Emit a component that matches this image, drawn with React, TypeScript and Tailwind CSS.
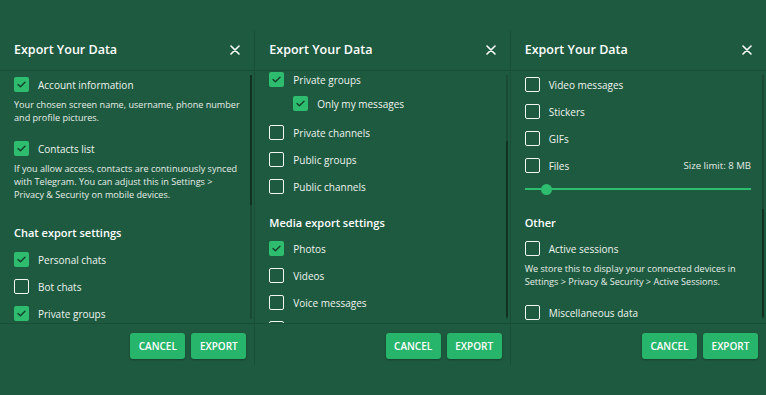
import React from 'react';

const font = { fontFamily: '"Open Sans", "Noto Sans", sans-serif' };

function Box({ checked }: { checked?: boolean }) {
  if (checked) {
    return (
      <span className="w-[15px] h-[15px] shrink-0 rounded-[2px] bg-[#2ebd6e] flex items-center justify-center">
        <svg width="9" height="7" viewBox="0 0 9 7" fill="none">
          <path d="M1 3.6 L3.4 5.8 L8 1.2" stroke="#163f2b" strokeWidth="1.4" strokeLinecap="round" strokeLinejoin="round" />
        </svg>
      </span>
    );
  }
  return <span className="w-[15px] h-[15px] shrink-0 rounded-[2px] border-[1.5px] border-[#f2f6f3]" />;
}

function Row({ label, checked, className = '', right }: { label: string; checked?: boolean; className?: string; right?: string }) {
  return (
    <div className={`h-[16px] flex items-center gap-[9px] ${className}`}>
      <Box checked={checked} />
      <span className="text-[10px] text-[#eef4f0] leading-none flex-1 whitespace-nowrap pt-[1px]">{label}</span>
      {right && <span className="text-[9.6px] text-[#e3ebe6] leading-none pt-[1px]">{right}</span>}
    </div>
  );
}

function Desc({ children, className = '' }: { children: React.ReactNode; className?: string }) {
  return <p className={`text-[9.1px] leading-[13px] text-[#e6eee9] whitespace-nowrap ${className}`}>{children}</p>;
}

function Heading({ children, className = '' }: { children: React.ReactNode; className?: string }) {
  return <div className={`h-[16px] flex items-center text-[11px] font-semibold text-white ${className}`}>{children}</div>;
}

function Panel({ children, thumbTop, thumbHeight, last }: { children: React.ReactNode; thumbTop: number; thumbHeight: number; last?: boolean }) {
  return (
    <div className={`flex flex-col h-[335px] ${last ? '' : 'border-r border-[#1a4f37]'}`}>
      <div className="h-[41px] shrink-0 flex items-center justify-between pl-[14px] pr-[14px] border-b border-[#1a4f37]">
        <span className="text-[12.5px] font-semibold text-white">Export Your Data</span>
        <svg width="10" height="10" viewBox="0 0 10 10">
          <path d="M1 1 L9 9 M9 1 L1 9" stroke="#fff" strokeWidth="1.6" strokeLinecap="round" />
        </svg>
      </div>
      <div className="relative flex-1 overflow-hidden pl-[14px] pr-[15px]">
        {children}
        <div className="absolute right-[2px] top-[4px] bottom-[4px] w-[2px] bg-[#194a33]">
          <div className="absolute left-0 w-[2px] bg-[#10321f]" style={{ top: thumbTop, height: thumbHeight }} />
        </div>
      </div>
      <div className="h-[42px] shrink-0 border-t border-[#1a4f37] flex justify-end items-start gap-[6px] pt-[9px] pr-[8px]">
        <button className="w-[55px] h-[26px] rounded-[3px] bg-[#27b56b] text-white text-[10px] font-semibold shadow-[0_1px_2px_rgba(0,0,0,0.3)]">CANCEL</button>
        <button className="w-[55px] h-[26px] rounded-[3px] bg-[#27b56b] text-white text-[10px] font-semibold shadow-[0_1px_2px_rgba(0,0,0,0.3)]">EXPORT</button>
      </div>
    </div>
  );
}

export default function App() {
  return (
    <div className="w-[766px] h-[395px] bg-[#1e5a3f] pt-[30px] overflow-hidden" style={font}>
      <div className="grid grid-cols-3">
        {/* first page */}
        <Panel thumbTop={0} thumbHeight={130}>
          <Row label="Account information" checked className="mt-[5px]" />
          <Desc className="mt-[6px]">
            Your chosen screen name, username, phone number
            <br />
            and profile pictures.
          </Desc>
          <Row label="Contacts list" checked className="mt-[16px]" />
          <Desc className="mt-[6px]">
            If you allow access, contacts are continuously synced
            <br />
            with Telegram. You can adjust this in Settings &gt;
            <br />
            Privacy &amp; Security on mobile devices.
          </Desc>
          <Heading className="mt-[24px]">Chat export settings</Heading>
          <Row label="Personal chats" checked className="mt-[10px]" />
          <Row label="Bot chats" className="mt-[11px]" />
          <Row label="Private groups" checked className="mt-[11px]" />
        </Panel>

        {/* scrolled */}
        <Panel thumbTop={66} thumbHeight={176}>
          <Row label="Private groups" checked className="mt-0" />
          <Row label="Only my messages" checked className="mt-[8px] ml-[24px]" />
          <Row label="Private channels" className="mt-[13px]" />
          <Row label="Public groups" className="mt-[11px]" />
          <Row label="Public channels" className="mt-[11px]" />
          <Heading className="mt-[21px]">Media export settings</Heading>
          <Row label="Photos" checked className="mt-[9px]" />
          <Row label="Videos" className="mt-[11px]" />
          <Row label="Voice messages" className="mt-[11px]" />
          <div className="mt-[11px] flex">
            <Box />
          </div>
        </Panel>

        {/* scrolled to the end */}
        <Panel thumbTop={134} thumbHeight={108} last>
          <Row label="Video messages" className="mt-[5px]" />
          <Row label="Stickers" className="mt-[11px]" />
          <Row label="GIFs" className="mt-[11px]" />
          <Row label="Files" right="Size limit: 8 MB" className="mt-[11px]" />
          <div className="relative h-[12px] mt-[10px] flex items-center">
            <div className="w-full h-[2px] bg-[#2ebd6e]" />
            <div className="absolute left-[16px] top-[0.5px] w-[11px] h-[11px] rounded-full bg-[#2ebd6e]" />
          </div>
          <Heading className="mt-[20px]">Other</Heading>
          <Row label="Active sessions" className="mt-[9px]" />
          <Desc className="mt-[6px]">
            We store this to display your connected devices in
            <br />
            Settings &gt; Privacy &amp; Security &gt; Active Sessions.
          </Desc>
          <Row label="Miscellaneous data" className="mt-[16px]" />
        </Panel>
      </div>
    </div>
  );
}
